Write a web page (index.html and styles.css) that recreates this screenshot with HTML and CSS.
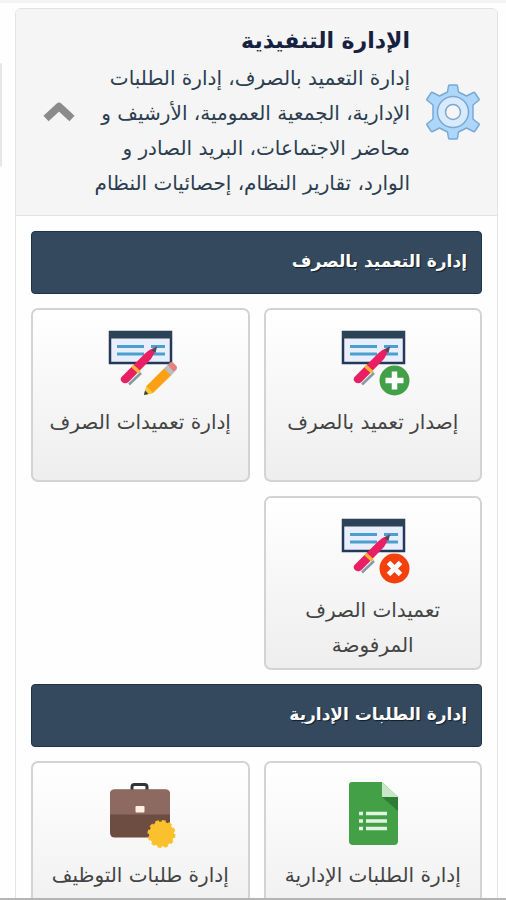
FILE: index.html
```html
<!DOCTYPE html>
<html lang="ar" dir="rtl">
<head>
<meta charset="utf-8">
<meta name="viewport" content="width=device-width, initial-scale=1">
<title>الإدارة التنفيذية</title>
<link rel="stylesheet" href="styles.css">
</head>
<body>
<svg class="defs" aria-hidden="true">
  <defs>
    <g id="cheque">
      <rect x="2" y="3" width="61" height="31" fill="#e8eefb" stroke="#24385a" stroke-width="2.500"/>
      <rect x="1" y="2" width="63" height="7.500" fill="#2c4257"/>
      <path d="M9 17.500h27M43 17.500h14M9 25h27M43 25h14" stroke="#4b9fce" stroke-width="3"/>
      <path d="M21 55.500 33 44" stroke="#8799a3" stroke-width="2.500"/>
      <path d="M13.500 48 37 24.500Q42 20 49 17.500 46.500 25 43 30L20.500 53q-3.500 2.500-6.500 0-2.500-2.500-.5-5z" fill="#e91e63"/>
      <path d="M43.500 21 49 17.500 47.500 24z" fill="#424f5e"/>
      <path d="M24.500 37 31.500 43.500" stroke="#ffb62e" stroke-width="3.500"/>
    </g>
  </defs>
</svg>
<div class="screen">
  <aside class="neighbour"></aside>
  <main class="panel">
    <header class="panel-head">
      <svg class="gear" viewBox="0 0 54 56" aria-hidden="true">
        <path d="M23.500 1h7q1 0 1 1l1 6 8 4 7-3.500q1-.5 1.500.5l4 6q.5 1-.5 1.500l-5.500 4.500v14l5.500 4.500q1 .5.500 1.500l-4 6q-.5 1-1.500.5l-7-3.500-8 4-1 6q0 1-1 1h-7q-1 0-1-1l-1-6-8-4-7 3.500q-1 .5-1.500-.5l-4-6q-.5-1 .5-1.500L7 35V21l-5.500-4.500q-1-.5-.5-1.500l4-6q.5-1 1.500-.5l7 3.500 8-4 1-6q0-1 1-1z" fill="#add6fb" stroke="#78a9d5" stroke-width="1.500" stroke-linejoin="round"/>
        <circle cx="27" cy="28" r="15.500" fill="#d9eafc" stroke="#78a9d5" stroke-width="1.500"/>
        <circle cx="27" cy="28" r="7.500" fill="#f5f5f5" stroke="#78a9d5" stroke-width="1.500"/>
      </svg>
      <div class="intro">
        <h1>الإدارة التنفيذية</h1>
        <p>إدارة التعميد بالصرف، إدارة الطلبات<br>الإدارية، الجمعية العمومية، الأرشيف و<br>محاضر الاجتماعات، البريد الصادر و<br>الوارد، تقارير النظام، إحصائيات النظام</p>
      </div>
      <button class="toggle" type="button" aria-label="طي القسم">
        <svg viewBox="0 0 32 22" aria-hidden="true"><path d="M3 17.500 16 5.500 29 17.500" fill="none" stroke="#8b8b8b" stroke-width="7.500" stroke-linejoin="round"/></svg>
      </button>
    </header>
    <div class="panel-body">
      <h2>إدارة التعميد بالصرف</h2>
      <a class="tile" href="#issue">
        <svg class="icon" viewBox="-2 0 68 68" aria-hidden="true">
          <use href="#cheque"/>
          <circle cx="53.500" cy="51.500" r="15" fill="#43a047"/>
          <path d="M53.500 42.500v18M44.500 51.500h18" stroke="#fff" stroke-width="5.500"/>
        </svg>
        <span>إصدار تعميد بالصرف</span>
      </a>
      <a class="tile" href="#manage">
        <svg class="icon" viewBox="-2 0 68 68" aria-hidden="true">
          <use href="#cheque"/>
          <path d="M36 66 38.500 57 57 38.500 64 45.500 45 64z" fill="#ff9f16"/>
          <path d="M36 66 38.500 57 45 64z" fill="#f6c933"/>
          <path d="M36 66 37 61.500 40.500 65z" fill="#30434a"/>
          <path d="M56 39.500 59.500 36 66.500 43 63 46.500z" fill="#b9bec0"/>
          <path d="M59.500 36 62 33.500q2-1 3.500.5l3 3q1 1.500 0 3.500L66 43z" fill="#e58080"/>
        </svg>
        <span>إدارة تعميدات الصرف</span>
      </a>
      <a class="tile" href="#rejected">
        <svg class="icon" viewBox="-2 0 68 68" aria-hidden="true">
          <use href="#cheque"/>
          <circle cx="53.500" cy="51.500" r="15" fill="#f4400c"/>
          <path d="M47.500 45.500l12 12M59.500 45.500l-12 12" stroke="#fff" stroke-width="5"/>
        </svg>
        <span>تعميدات الصرف المرفوضة</span>
      </a>
      <h2>إدارة الطلبات الإدارية</h2>
      <a class="tile" href="#requests">
        <svg class="icon" viewBox="-2 0 68 68" aria-hidden="true">
          <path d="M11 0h30l16 15v44a4 4 0 0 1-4 4H12a4 4 0 0 1-4-4V3a3 3 0 0 1 3-3z" fill="#43a047"/>
          <path d="M41 0 57 15H41z" fill="#c8e6c9"/>
          <path d="M41 15H57V29z" fill="#2e7d32"/>
          <path d="M18 31.500h4M25 31.500h21M18 39h4M25 39h21M18 46.500h4M25 46.500h21" stroke="#e2f5e3" stroke-width="3.500"/>
        </svg>
        <span>إدارة الطلبات الإدارية</span>
      </a>
      <a class="tile" href="#jobs">
        <svg class="icon" viewBox="-2 0 68 68" aria-hidden="true">
          <path d="M24 9V5q0-2.500 2.500-2.500h10Q39 2.500 39 5v4" fill="none" stroke="#343434" stroke-width="3"/>
          <rect x="2" y="7.500" width="60" height="48" rx="4.500" fill="#6d4c41"/>
          <path d="M2 32.500V12Q2 7.500 6.500 7.500h51Q62 7.500 62 12V32.500z" fill="#8d6962"/>
          <rect x="27.500" y="24" width="9" height="6.500" rx="1" fill="#fff0df"/>
          <circle cx="53.500" cy="52" r="12.500" fill="#fbc02d"/>
          <circle cx="53.500" cy="52" r="12.500" fill="none" stroke="#fbc02d" stroke-width="3" stroke-dasharray="3.800 2.740"/>
        </svg>
        <span>إدارة طلبات التوظيف</span>
      </a>
    </div>
  </main>
</div>
</body>
</html>
```
FILE: styles.css
```css
* { box-sizing: border-box; }
body {
  margin: 0;
  background: #fefefe;
  color: #2c3e50;
  font-family: "DejaVu Sans", sans-serif;
  font-size: 20px;
  line-height: 35px;
}
.defs { position: absolute; width: 0; height: 0; }
.screen {
  display: flex;
  flex-direction: row-reverse;
  align-items: flex-start;
  gap: 13px;
  height: 100vh;
  overflow: hidden;
  padding: 5px 8px 0 0;
  border-top: 3px solid #f3f3f3;
  border-bottom: 2px solid #b5b5b5;
}
.neighbour {
  width: 2px;
  height: 104px;
  margin-top: 55px;
  background: #e6e6e6;
  border-radius: 0 3px 3px 0;
}
.panel {
  flex: 1;
  border: 1px solid #e3e3e3;
  border-radius: 6px;
  background: #fefefe;
}
.panel-head {
  display: flex;
  align-items: center;
  padding: 14px 17px 14px 27px;
  background: #f5f5f5;
  border-bottom: 1px solid #e3e3e3;
  border-radius: 5px 5px 0 0;
}
.gear { width: 54px; height: 56px; flex: none; }
.intro { flex: 1; margin-right: 16px; white-space: nowrap; }
h1 { margin: 0 0 3px; font-size: 22px; line-height: 35px; color: #16213f; }
p { margin: 0; }
.toggle {
  flex: none;
  width: 32px;
  padding: 0;
  border: 0;
  background: none;
}
.toggle svg { display: block; width: 32px; height: 22px; }
.panel-body {
  display: grid;
  grid-template-columns: 1fr 1fr;
  gap: 14px;
  padding: 15px 15px 14px;
}
h2 {
  grid-column: 1 / -1;
  margin: 0;
  padding: 12px 14px 14px;
  border: 1px solid #1d3350;
  border-radius: 4px;
  background: #34495e;
  color: #fff;
  font-size: 17px;
  text-shadow: 1px 1px 1px #111c28;
}
.tile {
  display: flex;
  flex-direction: column;
  align-items: center;
  gap: 8px;
  min-height: 174px;
  padding: 19px 8px 4px;
  border: 2px solid #d3d3d3;
  border-radius: 7px;
  background: linear-gradient(#ffffff, #eeeeee);
  color: #444;
  text-align: center;
  text-decoration: none;
}
.tile span { max-width: 190px; }
.icon { width: 68px; height: 68px; overflow: visible; }
```
